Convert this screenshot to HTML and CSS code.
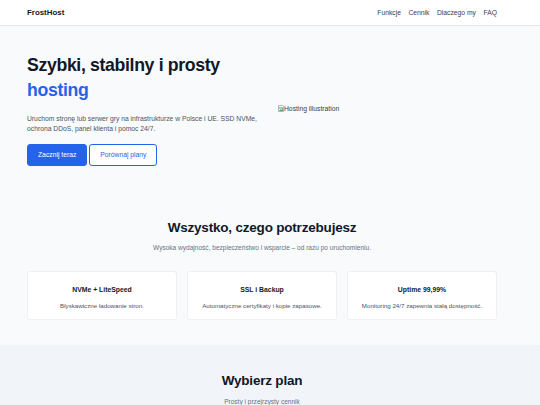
FILE: index.html
```html
<!DOCTYPE html>
<html lang="pl">
<head>
  <meta charset="UTF-8" />
  <meta name="viewport" content="width=device-width, initial-scale=1.0"/>
  <title>FrostHost – hosting</title>
  <link rel="stylesheet" href="styles.css">
</head>
<body>

  <!-- Header -->
  <header class="site-header">
    <div class="container nav-bar">
      <a class="logo" href="#">FrostHost</a>
      <nav class="nav-links">
        <a href="#funkcje">Funkcje</a>
        <a href="#cennik">Cennik</a>
        <a href="#dlaczego">Dlaczego my</a>
        <a href="#faq">FAQ</a>
      </nav>
    </div>
  </header>

  <!-- Hero -->
  <section class="hero">
    <div class="container hero-grid">
      <div class="hero-text">
        <h1>Szybki, stabilny i prosty <span class="accent">hosting</span></h1>
        <p>Uruchom stronę lub serwer gry na infrastrukturze w Polsce i UE. SSD NVMe, ochrona DDoS, panel klienta i pomoc 24/7.</p>
        <div class="hero-actions">
          <a class="btn btn-primary" href="#cennik">Zacznij teraz</a>
          <a class="btn btn-outline" href="#cennik">Porównaj plany</a>
        </div>
      </div>
      <div class="hero-image">
        <span class="broken-img">
          <svg width="6" height="7" viewBox="0 0 6 7">
            <path d="M0.5 0.5h4l1 1v5h-5z" fill="#fff" stroke="#9ca3af" stroke-width="0.8"/>
            <path d="M1 2h4v2h-4z" fill="#9cc3e6"/>
            <path d="M1 6l1.5-2 1 1 1.5-1.5v2.5z" fill="#5fa85f"/>
          </svg>Hosting illustration
        </span>
      </div>
    </div>
  </section>

  <!-- Features -->
  <section class="features" id="funkcje">
    <div class="container">
      <h2 class="section-title">Wszystko, czego potrzebujesz</h2>
      <p class="section-sub">Wysoka wydajność, bezpieczeństwo i wsparcie – od razu po uruchomieniu.</p>
      <div class="card-grid">
        <div class="card">
          <h3>NVMe + LiteSpeed</h3>
          <p>Błyskawiczne ładowanie stron.</p>
        </div>
        <div class="card">
          <h3>SSL i Backup</h3>
          <p>Automatyczne certyfikaty i kopie zapasowe.</p>
        </div>
        <div class="card">
          <h3>Uptime 99,99%</h3>
          <p>Monitoring 24/7 zapewnia stałą dostępność.</p>
        </div>
      </div>
    </div>
  </section>

  <!-- Pricing -->
  <section class="pricing" id="cennik">
    <div class="container">
      <h2 class="section-title">Wybierz plan</h2>
      <p class="section-sub">Prosty i przejrzysty cennik</p>
      <div class="card-grid">
        <div class="card">
          <h3>Start</h3>
          <p>9,99 zł / mies.</p>
        </div>
        <div class="card">
          <h3>Pro</h3>
          <p>19,99 zł / mies.</p>
        </div>
        <div class="card">
          <h3>Biznes</h3>
          <p>39,99 zł / mies.</p>
        </div>
      </div>
    </div>
  </section>

</body>
</html>
```

FILE: styles.css
```css
* {
  margin: 0;
  padding: 0;
  box-sizing: border-box;
}

body {
  font-family: 'Liberation Sans', Arial, sans-serif;
  color: #111827;
  background: #f8fafc;
}

a {
  text-decoration: none;
  color: inherit;
}

.container {
  max-width: 470px;
  margin: 0 27px;
}

/* Header */
.site-header {
  background: #fff;
  border-bottom: 1px solid #e5e7eb;
}

.nav-bar {
  height: 25px;
  display: flex;
  justify-content: space-between;
  align-items: center;
}

.logo {
  font-size: 7.9px;
  font-weight: bold;
  color: #111827;
}

.nav-links {
  display: flex;
  gap: 7.5px;
  font-size: 6.75px;
  color: #374151;
}

/* Hero */
.hero {
  padding: 27px 0;
}

.hero-grid {
  display: grid;
  grid-template-columns: 235px 1fr;
  gap: 16px;
  align-items: center;
}

.hero-text h1 {
  font-size: 17.7px;
  line-height: 25px;
  letter-spacing: -0.35px;
  font-weight: bold;
  color: #111827;
}

.hero-text .accent {
  display: block;
  color: #2563eb;
}

.hero-text p {
  margin-top: 10.5px;
  font-size: 6.75px;
  line-height: 10.8px;
  color: #4b5563;
}

.hero-actions {
  display: flex;
  gap: 2px;
  margin-top: 8.5px;
}

.btn {
  display: inline-block;
  font-size: 6.75px;
  line-height: 8px;
  padding: 6px 10px;
  border: 1px solid #2563eb;
  border-radius: 3px;
}

.btn-primary {
  background: #2563eb;
  color: #fff;
}

.btn-outline {
  background: #fff;
  color: #2563eb;
}

.hero-image {
  margin-bottom: 5px;
}

.broken-img {
  display: inline-flex;
  align-items: center;
  font-size: 6.75px;
  color: #374151;
}

/* Sections */
.features {
  padding: 27px 0 25px;
}

.pricing {
  background: #f1f5f9;
  padding: 28px 0 27px;
}

.section-title {
  text-align: center;
  font-size: 13.5px;
  line-height: 16px;
  letter-spacing: -0.2px;
  color: #111827;
}

.section-sub {
  text-align: center;
  margin-top: 7.5px;
  font-size: 6.55px;
  line-height: 10px;
  color: #6b7280;
}

.card-grid {
  display: grid;
  grid-template-columns: repeat(3, 1fr);
  gap: 10px;
  margin-top: 18px;
}

.card {
  background: #fff;
  border: 1px solid #eef0f4;
  border-radius: 3px;
  padding: 13px 10px 9px;
  text-align: center;
}

.card h3 {
  font-size: 6.85px;
  line-height: 9px;
  color: #111827;
}

.card p {
  margin-top: 7px;
  font-size: 6.2px;
  line-height: 9px;
  color: #4b5563;
}
```
